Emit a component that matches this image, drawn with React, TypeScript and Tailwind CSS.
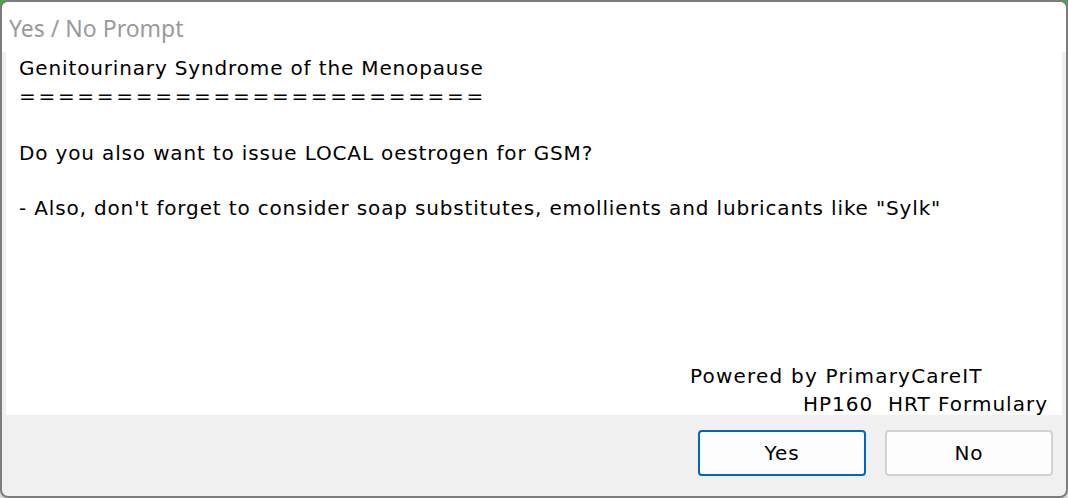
import React from "react";

const body = { fontFamily: '"DejaVu Sans", Verdana, sans-serif' };

export default function App() {
  return (
    <div className="w-[1068px] h-[498px] bg-linear-to-b from-[#3fae3f] to-[#cddcea]">
      <div className="w-full h-full rounded-[8px] border-2 border-[#7c7c7c] bg-[#f0f0f0] flex flex-col overflow-hidden">
        <div className="h-[50px] bg-white flex items-center pl-[7px] shrink-0">
          <span className="text-[23px] text-[#9a9a9a] leading-none pt-[3px]" style={{ fontFamily: '"Noto Sans", "Open Sans", sans-serif' }}>
            Yes / No Prompt
          </span>
        </div>
        <div
          className="mx-[4px] bg-white h-[363px] flex flex-col pl-[13px] pr-[12px] pt-[2px] text-black text-[20px] leading-[28px] tracking-[0.85px]"
          style={body}
        >
          <div>Genitourinary Syndrome of the Menopause</div>
          <div className="tracking-[2.7px]">========================</div>
          <div className="mt-[29px]">Do you also want to issue LOCAL oestrogen for GSM?</div>
          <div className="mt-[27px]">- Also, don&apos;t forget to consider soap substitutes, emollients and lubricants like &quot;Sylk&quot;</div>
          <div className="mt-auto mb-[-3px] flex flex-col">
            <div className="pl-[671px] tracking-[1.2px]">Powered by PrimaryCareIT</div>
            <div className="self-end pr-[2px] tracking-[1px]">HP160&nbsp;&nbsp;HRT Formulary</div>
          </div>
        </div>
        <div className="flex-1 flex justify-end items-start pt-[15px] pr-[13px] gap-[19px]" style={body}>
          <button className="w-[168px] h-[46px] rounded-[4px] border-2 border-[#0067c0] bg-[#fdfdfd] text-[20px] tracking-[0.85px] text-black">Yes</button>
          <button className="w-[168px] h-[46px] rounded-[4px] border-2 border-[#d2d2d2] bg-[#fdfdfd] text-[20px] tracking-[0.85px] text-black">No</button>
        </div>
      </div>
    </div>
  );
}
